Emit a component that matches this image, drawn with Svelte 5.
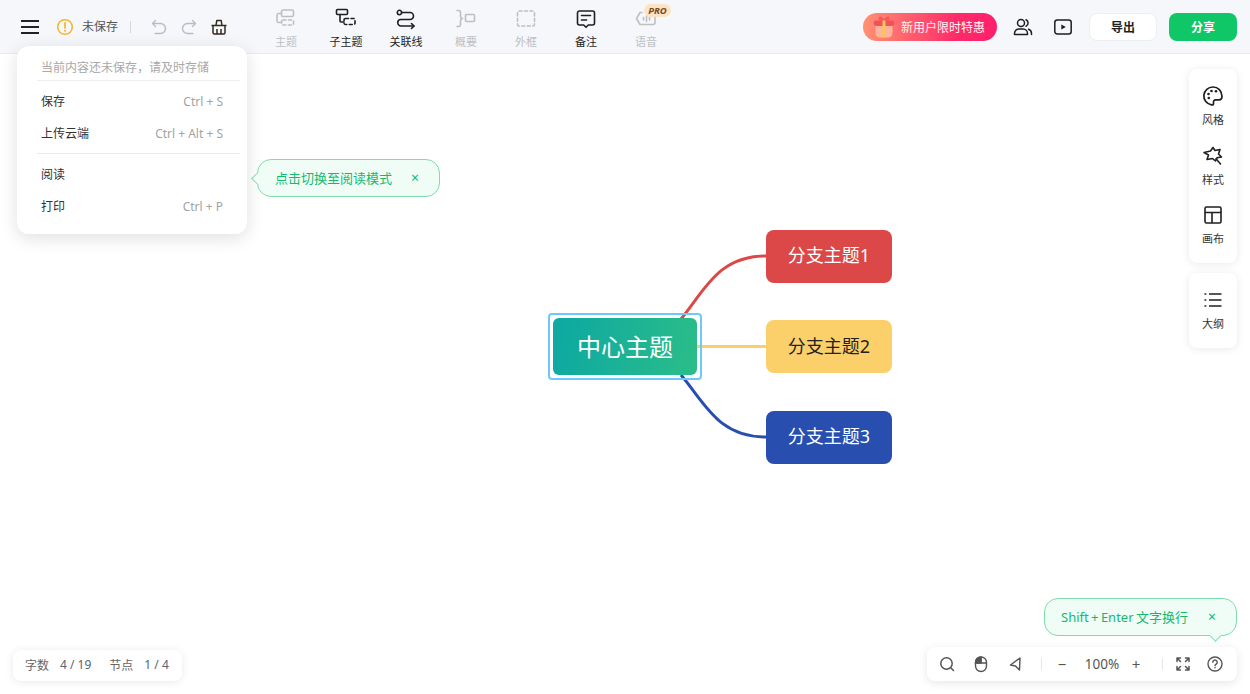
<script lang="ts">
  const tools = [
    { label: "主题", off: true, d: ["M9 3h9a1.5 1.5 0 0 1 1.5 1.5V8A1.5 1.5 0 0 1 18 9.500H9A1.500 1.500 0 0 1 7.500 8V4.500A1.500 1.500 0 0 1 9 3Z", "M7.500 6.500H5A2 2 0 0 0 3 8.500v5A2 2 0 0 0 5 15.500h2.500"], dash: "M9 13h9.500a1 1 0 0 1 1 1v3a1 1 0 0 1-1 1H9a1.500 1.500 0 0 1-1.500-1.500V14.500A1.500 1.500 0 0 1 9 13Z" },
    { label: "子主题", off: false, d: ["M3.500 2.500h9a1 1 0 0 1 1 1v3a1 1 0 0 1-1 1h-9a1 1 0 0 1-1-1v-3a1 1 0 0 1 1-1Z", "M6 7.500v6.500a1 1 0 0 0 1 1h3"], dash: "M11.500 11.500h8a1.500 1.500 0 0 1 1.500 1.500v3a1.500 1.500 0 0 1-1.500 1.500h-8A1.500 1.500 0 0 1 10 16v-3a1.500 1.500 0 0 1 1.500-1.500Z" },
    { label: "关联线", off: false, d: ["M7.500 5.500H16a3.500 3.500 0 0 1 0 7H7a3.200 3.200 0 0 0 0 6.500h13", "M17.500 16.500 20 19l-2.500 2.500", "M5.500 3.300a2.200 2.200 0 1 1 0 4.400 2.200 2.200 0 0 1 0-4.400Z"] },
    { label: "概要", off: true, d: ["M3 3.500h1.500a2 2 0 0 1 2 2V9a2.500 2.500 0 0 0 2 2.500 2.500 2.500 0 0 0-2 2.500v3.500a2 2 0 0 1-2 2H3", "M12.500 7.500h7a1 1 0 0 1 1 1v5a1 1 0 0 1-1 1h-7a1 1 0 0 1-1-1v-5a1 1 0 0 1 1-1Z"] },
    { label: "外框", off: true, d: [], dash: "M5 4h14a1.500 1.500 0 0 1 1.500 1.500v12A1.500 1.500 0 0 1 19 19H5a1.500 1.500 0 0 1-1.500-1.500v-12A1.500 1.500 0 0 1 5 4Z" },
    { label: "备注", off: false, d: ["M5.500 4h13A2 2 0 0 1 20.500 6v10a2 2 0 0 1-2 2h-4.200L12 20.300 9.700 18H5.500a2 2 0 0 1-2-2V6a2 2 0 0 1 2-2Z", "M7.500 8.500h9", "M7.500 13h5"] },
    { label: "语音", off: true, pro: true, d: ["M8 5.500H6L2.500 11.500 6 17.500h13a2 2 0 0 0 2-2V8", "M9.500 10.500v2.500", "M12.500 9v5.500", "M15.500 10.500v2.500"] }
  ];
</script>

<div class="page">
  <header class="topbar">
    <div class="left">
      <button class="burger" aria-label="菜单"><i></i><i></i><i></i></button>
      <svg class="warn" viewBox="0 0 18 18" width="18" height="18">
        <circle cx="9" cy="9" r="7.300" fill="none" stroke="#f7b32b" stroke-width="1.500" />
        <path d="M9 4.800v5.200" stroke="#f7b32b" stroke-width="1.700" stroke-linecap="round" />
        <circle cx="9" cy="12.800" r="1" fill="#f7b32b" />
      </svg>
      <span class="unsaved">未保存</span>
      <span class="vline"></span>
      <svg class="hist undo" viewBox="0 0 18 18" width="18" height="18" fill="none" stroke="#b9bcc2" stroke-width="1.400" stroke-linecap="round" stroke-linejoin="round">
        <path d="M5.500 2.500 2.500 5.500 5.500 8.500" />
        <path d="M3 5.500h7.500a5 5 0 0 1 0 10H5" />
      </svg>
      <svg class="hist redo" viewBox="0 0 18 18" width="18" height="18" fill="none" stroke="#b9bcc2" stroke-width="1.400" stroke-linecap="round" stroke-linejoin="round">
        <path d="M12.500 2.500 15.500 5.500 12.500 8.500" />
        <path d="M15 5.500H7.500a5 5 0 0 0 0 10H13" />
      </svg>
      <svg class="basket" viewBox="0 0 18 18" width="18" height="18" fill="none" stroke="#33291f" stroke-width="1.500" stroke-linejoin="round">
        <path d="M6 7.500 6.800 2.500h4.400L12 7.500" />
        <path d="M1.500 7.500h15" />
        <path d="M3 7.500v7a1.500 1.500 0 0 0 1.500 1.500h9a1.500 1.500 0 0 0 1.500-1.500v-7" />
        <path d="M7 11v5M11 11v5" />
      </svg>
    </div>

    <nav class="tools">
      {#each tools as t}
        <div class="tool" class:off={t.off}>
          <span class="tool-icon">
            <svg viewBox="0 0 24 24" width="24" height="24" fill="none" stroke="currentColor" stroke-width="1.600" stroke-linecap="round" stroke-linejoin="round">
              {#each t.d as p}<path d={p} />{/each}
              {#if t.dash}<path d={t.dash} stroke-dasharray="3 2.500" />{/if}
            </svg>
            {#if t.pro}<em class="pro">PRO</em>{/if}
          </span>
          <span class="tool-label">{t.label}</span>
        </div>
      {/each}
    </nav>

    <div class="right">
      <div class="promo">
        <svg viewBox="0 0 22 24" width="22" height="24">
          <path d="M11 5C9 0 4 1 6 5l5 2 5-2c2-4-3-5-5 0Z" fill="#f4595b" />
          <path d="M2.500 9h17v9a4.500 4.500 0 0 1-4.500 4.500H7A4.500 4.500 0 0 1 2.500 18Z" fill="#ffb39c" />
          <path d="M2.500 5.500h17a1.800 1.800 0 0 1 1.800 1.800v1a2.700 2.700 0 0 1-2.700 2.700H3.400A2.700 2.700 0 0 1 .7 8.300v-1a1.800 1.800 0 0 1 1.800-1.800Z" fill="#f0525a" />
          <rect x="9.500" y="5.500" width="3" height="17" fill="#f7c84f" />
        </svg>
        <span>新用户限时特惠</span>
      </div>
      <svg class="r-icon" viewBox="0 0 20 20" width="20" height="20" fill="none" stroke="#1f1f1f" stroke-width="1.500" stroke-linecap="round">
        <circle cx="8" cy="6" r="3.500" />
        <path d="M1.500 17.500v-1a4.500 4.500 0 0 1 4.500-4.500h4a4.500 4.500 0 0 1 4.500 4.500v1H1.500Z" stroke-linejoin="round" />
        <path d="M13 2.800a3.500 3.500 0 0 1 0 6.400" />
        <path d="M15.500 12.200c1.800.6 3 2.200 3 4.300v1" />
      </svg>
      <svg class="r-icon play" viewBox="0 0 20 20" width="20" height="20" fill="none">
        <rect x="1.800" y="3" width="16.400" height="14" rx="2.500" stroke="#1f1f1f" stroke-width="1.500" />
        <path d="M8.300 7.400 12.800 10l-4.500 2.600Z" fill="#1f1f1f" />
      </svg>
      <button class="export">导出</button>
      <button class="share">分享</button>
    </div>
  </header>

  <main class="canvas">
    <svg class="links" viewBox="0 0 1250 694" width="1250" height="694" fill="none" stroke-width="3">
      <path d="M681 319C705 290 718 256 766 256" stroke="#dc4848" />
      <path d="M697 346.500H766" stroke="#fbd06a" />
      <path d="M681 375C705 403 718 437 766 437" stroke="#284fb0" />
    </svg>

    <div class="root-ring"><div class="root">中心主题</div></div>
    <div class="branch red">分支主题1</div>
    <div class="branch yellow">分支主题2</div>
    <div class="branch blue">分支主题3</div>
  </main>

  <div class="menu">
    <div class="hint">当前内容还未保存，请及时存储</div>
    <div class="row"><span>保存</span><kbd>Ctrl + S</kbd></div>
    <div class="row"><span>上传云端</span><kbd>Ctrl + Alt + S</kbd></div>
    <div class="sep"></div>
    <div class="row"><span>阅读</span></div>
    <div class="row"><span>打印</span><kbd>Ctrl + P</kbd></div>
  </div>

  <div class="bubble read-tip">
    <span>点击切换至阅读模式</span>
    <b class="x">×</b>
  </div>

  <aside class="side">
    <div class="side-card">
      <div class="side-item">
        <svg viewBox="0 0 22 22" width="22" height="22" fill="none" stroke="#1f1f1f" stroke-width="1.700" stroke-linejoin="round">
          <path d="M11 2a9 9 0 0 0-1.500 17.900c1.800.2 2.200-.9 2-2-.3-1.700.5-3 2.300-3h3.400c1.600 0 2.800-1 2.800-3.300C20 6 16 2 11 2Z" />
          <circle cx="6.500" cy="9" r="1.300" fill="#1f1f1f" stroke="none" />
          <circle cx="9.500" cy="6" r="1.300" fill="#1f1f1f" stroke="none" />
          <circle cx="14" cy="6.300" r="1.300" fill="#1f1f1f" stroke="none" />
          <circle cx="6.800" cy="13" r="1.300" fill="#1f1f1f" stroke="none" />
        </svg>
        <span>风格</span>
      </div>
      <div class="side-item">
        <svg viewBox="0 0 22 22" width="22" height="22" fill="none" stroke="#1f1f1f" stroke-width="1.600" stroke-linejoin="round" stroke-linecap="round">
          <path d="M8.500 6 11 2.500l2 3 5-1-1.500 4.500 3 3-4.500 .8-1.500 3.200-3-2.500-5.500 1 1.500-4.500L2 7.500Z" />
          <path d="M14 13.800l4.500 5.200" />
        </svg>
        <span>样式</span>
      </div>
      <div class="side-item">
        <svg viewBox="0 0 22 22" width="22" height="22" fill="none" stroke="#1f1f1f" stroke-width="1.600">
          <rect x="3" y="3" width="16" height="16" rx="1.500" />
          <path d="M3 8.500h16M10 8.500V19" />
        </svg>
        <span>画布</span>
      </div>
    </div>
    <div class="side-card outline">
      <div class="side-item">
        <svg viewBox="0 0 22 22" width="22" height="22" fill="none" stroke="#1f1f1f" stroke-width="1.700">
          <path d="M7 5h12.500M7 11h12.500M7 17h12.500" />
          <path d="M2.500 5h1.800M2.500 11h1.800M2.500 17h1.800" />
        </svg>
        <span>大纲</span>
      </div>
    </div>
  </aside>

  <div class="stats">
    <span>字数</span><span class="num">4 / 19</span>
    <span class="gap">节点</span><span class="num">1 / 4</span>
  </div>

  <div class="bubble enter-tip">
    <span>Shift + Enter 文字换行</span>
    <b class="x">×</b>
  </div>

  <div class="zoombar">
    <svg viewBox="0 0 18 18" width="18" height="18" fill="none" stroke="#555" stroke-width="1.500" stroke-linecap="round">
      <circle cx="8.500" cy="8.500" r="5.700" /><path d="M12.700 12.700 15.500 15.500" />
    </svg>
    <svg class="m16" viewBox="0 0 18 18" width="18" height="18" fill="none" stroke="#555" stroke-width="1.400">
      <rect x="3.500" y="2" width="11" height="14.500" rx="5.500" />
      <path d="M3.500 8h11M9 2v6" />
      <path d="M9 2a5.500 5.500 0 0 0-5.500 5.500V8H9Z" fill="#555" />
    </svg>
    <svg class="m16" viewBox="0 0 18 18" width="18" height="18" fill="none" stroke="#555" stroke-width="1.400" stroke-linejoin="round">
      <path d="M14 3 4.500 10 9.500 11 13.500 15Z" />
    </svg>
    <span class="zsep first"></span>
    <span class="zbtn minus">−</span>
    <span class="pct">100%</span>
    <span class="zbtn plus">+</span>
    <span class="zsep"></span>
    <svg class="fit" viewBox="0 0 18 18" width="18" height="18" fill="none" stroke="#555" stroke-width="1.500" stroke-linecap="round" stroke-linejoin="round">
      <path d="M3 6.500V3h3.500M3 3l3.500 3.500M15 6.500V3h-3.500M15 3l-3.500 3.500M3 11.500V15h3.500M3 15l3.500-3.500M15 11.500V15h-3.500M15 15l-3.500-3.500" />
    </svg>
    <svg class="help" viewBox="0 0 18 18" width="18" height="18" fill="none" stroke="#555" stroke-width="1.400" stroke-linecap="round">
      <circle cx="9" cy="9" r="7" />
      <path d="M6.800 7.200a2.200 2.200 0 1 1 3.400 1.900c-.8.500-1.200.9-1.200 1.700" />
      <circle cx="9" cy="12.800" r=".8" fill="#555" stroke="none" />
    </svg>
  </div>
</div>

<style>
  :global(body) {
    margin: 0;
    background: #fff;
    font-family: "Noto Sans", "Noto Sans CJK SC", sans-serif;
    color: #333;
  }
  .page {
    position: relative;
    width: 1250px;
    height: 694px;
    overflow: hidden;
    background: #fff;
  }
  button {
    font: inherit;
    border: 0;
    padding: 0;
    background: none;
  }

  .topbar {
    position: relative;
    z-index: 1;
    display: flex;
    align-items: center;
    height: 52px;
    background: #f5f7fb;
    border-bottom: 1px solid #e9ebee;
    padding-top: 1px;
  }
  .left {
    display: flex;
    align-items: center;
    width: 256px;
    padding-left: 21px;
    box-sizing: border-box;
    flex: none;
  }
  .burger {
    display: flex;
    flex-direction: column;
    justify-content: space-between;
    width: 18px;
    height: 14px;
    margin-right: 17px;
  }
  .burger i {
    display: block;
    height: 2px;
    background: #222;
  }
  .warn {
    margin-right: 8px;
  }
  .unsaved {
    font-size: 12px;
    color: #555;
    line-height: 18px;
  }
  .vline {
    width: 1px;
    height: 12px;
    background: #d5d7db;
    margin: 0 19px 0 12px;
  }
  .hist {
    margin-right: 12px;
  }
  .tools {
    display: flex;
  }
  .tool {
    display: flex;
    flex-direction: column;
    align-items: center;
    width: 60px;
    color: #1f1f1f;
    padding-top: 2px;
  }
  .tool.off {
    color: #bdbfc3;
  }
  .tool-icon {
    position: relative;
    display: block;
    height: 24px;
  }
  .tool-label {
    font-size: 11px;
    line-height: 14px;
    margin-top: 4px;
  }
  .pro {
    position: absolute;
    left: 10px;
    top: -3px;
    width: 27px;
    height: 13px;
    border-radius: 7px;
    background: #fbe3c4;
    color: #7a4a22;
    font: italic 700 9.500px/13px "Noto Sans", sans-serif;
    text-align: center;
  }
  .right {
    display: flex;
    align-items: center;
    margin-left: auto;
    padding-right: 13px;
  }
  .promo {
    display: flex;
    align-items: center;
    gap: 6px;
    width: 134px;
    height: 28px;
    box-sizing: border-box;
    padding-left: 10px;
    border-radius: 14px;
    background: linear-gradient(90deg, #ff9272, #ff2a6a 70%, #ff1f6c);
    color: #fff6f2;
    font-size: 12px;
    margin-right: 16px;
  }
  .r-icon {
    margin-right: 20px;
  }
  .play {
    margin-right: 16px;
  }
  .export,
  .share {
    width: 68px;
    height: 28px;
    border-radius: 8px;
    font-size: 12px;
    font-weight: 700;
  }
  .export {
    background: #fff;
    border: 1px solid #eceef1;
    color: #1f1f1f;
    margin-right: 12px;
  }
  .share {
    background: #10c767;
    color: #fff;
  }

  /* mind map, free canvas */
  .canvas {
    position: absolute;
    inset: 0;
    z-index: 0;
    pointer-events: none;
  }
  .links {
    position: absolute;
    left: 0;
    top: 0;
  }
  .root-ring {
    position: absolute;
    left: 548px;
    top: 313px;
    width: 154px;
    height: 67px;
    box-sizing: border-box;
    border: 2px solid #6cc9f9;
    border-radius: 4px;
    padding: 3px;
  }
  .root {
    display: flex;
    align-items: center;
    justify-content: center;
    box-sizing: border-box;
    height: 100%;
    padding-bottom: 3px;
    border-radius: 6px;
    background: linear-gradient(100deg, #0ca8a3, #2bbd88);
    color: #fff;
    font-size: 24px;
  }
  .branch {
    position: absolute;
    left: 766px;
    width: 126px;
    height: 53px;
    box-sizing: border-box;
    padding-bottom: 4px;
    border-radius: 8px;
    display: flex;
    align-items: center;
    justify-content: center;
    font-size: 18px;
    color: #fff;
  }
  .red {
    top: 229.500px;
    background: #dc4848;
  }
  .yellow {
    top: 320px;
    background: #fbd06a;
    color: #222;
  }
  .blue {
    top: 410.500px;
    background: #284fb0;
  }

  /* file menu */
  .menu {
    position: absolute;
    z-index: 3;
    left: 17px;
    top: 46px;
    width: 230px;
    height: 188px;
    box-sizing: border-box;
    padding: 10px 7px 0 24px;
    background: #fff;
    border-radius: 12px;
    box-shadow: 0 4px 18px rgba(0, 0, 0, 0.13);
    font-size: 12px;
  }
  .hint {
    color: #a8a8a8;
    line-height: 24px;
    border-bottom: 1px solid #eceef0;
    margin-left: -4px;
    padding-left: 4px;
    height: 24px;
  }
  .row {
    display: flex;
    align-items: center;
    justify-content: space-between;
    height: 32px;
    padding-right: 17px;
    color: #333;
  }
  .menu .hint + .row {
    margin-top: 4px;
  }
  .row kbd {
    font: inherit;
    color: #a3a3a3;
  }
  .sep {
    height: 1px;
    background: #e8e9eb;
    margin: 4px 0 4px -4px;
  }

  /* hint bubbles */
  .bubble {
    position: absolute;
    z-index: 3;
    display: flex;
    align-items: center;
    justify-content: space-between;
    box-sizing: border-box;
    height: 38px;
    background: #effdf6;
    border: 1px solid #7fdcab;
    border-radius: 14px;
    color: #14b96e;
    font-size: 13px;
  }
  .bubble span {
    padding-bottom: 2px;
    word-spacing: -1px;
  }
  .bubble::after {
    content: "";
    position: absolute;
    width: 8px;
    height: 8px;
    background: #effdf6;
    border: 1px solid #7fdcab;
    border-width: 0 0 1px 1px;
  }
  .x {
    font-weight: 400;
    font-size: 14px;
    line-height: 14px;
  }
  .read-tip {
    left: 257px;
    top: 159px;
    width: 183px;
    padding: 0 20px 0 17px;
  }
  .read-tip::after {
    left: -5px;
    top: 14px;
    transform: rotate(45deg);
  }
  .enter-tip {
    left: 1044px;
    top: 598px;
    width: 193px;
    padding: 0 20px 0 16px;
  }
  .enter-tip::after {
    left: 166px;
    bottom: -5px;
    transform: rotate(-45deg);
  }

  /* right rail */
  .side {
    position: absolute;
    z-index: 2;
    left: 1189px;
    top: 69px;
    width: 48px;
    display: flex;
    flex-direction: column;
    gap: 10px;
  }
  .side-card {
    display: flex;
    flex-direction: column;
    gap: 11.500px;
    height: 194px;
    box-sizing: border-box;
    padding-top: 16px;
    background: #fff;
    border-radius: 8px;
    box-shadow: 0 1px 8px rgba(0, 0, 0, 0.09);
  }
  .side-card.outline {
    height: 75px;
  }
  .side-item {
    display: flex;
    flex-direction: column;
    align-items: center;
    gap: 5px;
    height: 48px;
    font-size: 11px;
    line-height: 16px;
    color: #333;
  }

  /* bottom bars */
  .stats {
    position: absolute;
    z-index: 2;
    left: 13px;
    top: 650px;
    width: 169px;
    height: 31px;
    box-sizing: border-box;
    padding: 0 0 2px 12px;
    display: flex;
    align-items: center;
    background: #fff;
    border-radius: 8px;
    box-shadow: 0 1px 8px rgba(0, 0, 0, 0.09);
    font-size: 12px;
    color: #666;
  }
  .num {
    margin-left: 11px;
    color: #5a6472;
  }
  .gap {
    margin-left: 18px;
  }
  .zoombar {
    position: absolute;
    z-index: 2;
    left: 927px;
    top: 647px;
    width: 310px;
    height: 34px;
    box-sizing: border-box;
    padding: 0 0 1px 11px;
    display: flex;
    align-items: center;
    background: #fff;
    border-radius: 8px;
    box-shadow: 0 2px 10px rgba(0, 0, 0, 0.1);
    color: #555;
  }
  .m16 {
    margin-left: 16px;
  }
  .zsep {
    width: 1px;
    height: 12px;
    background: #e6e7e9;
    margin-left: 17px;
  }
  .zbtn {
    width: 18px;
    text-align: center;
    font-size: 15px;
    line-height: 18px;
  }
  .minus {
    margin-left: 11px;
  }
  .pct {
    width: 44px;
    margin-left: 9px;
    text-align: center;
    font-size: 13.500px;
  }
  .plus {
    margin-left: 3px;
  }
  .fit {
    margin-left: 11px;
  }
  .help {
    margin-left: 14px;
  }
</style>
